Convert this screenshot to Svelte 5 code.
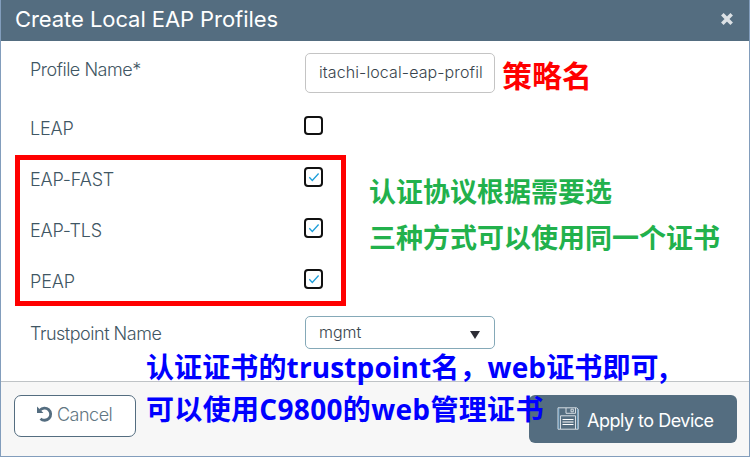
<script>
  const protocols = $state([
    { name: 'LEAP', on: false },
    { name: 'EAP-FAST', on: true },
    { name: 'EAP-TLS', on: true },
    { name: 'PEAP', on: true }
  ]);
</script>

<div class="dialog">
  <header>
    <h1>Create Local EAP Profiles</h1>
    <svg class="close" viewBox="0 0 12 12" width="12" height="12"><path d="M2.6 2.6l6.8 6.8M9.4 2.6l-6.8 6.8" /></svg>
  </header>

  <main>
    <div class="row first">
      <span class="label name">Profile Name*</span>
      <div class="input"><span>itachi-local-eap-profil</span></div>
    </div>
    {#each protocols as p}
      <div class="row">
        <span class="label protocol">{p.name}</span>
        <button class="check" aria-label={p.name} onclick={() => (p.on = !p.on)}>
          {#if p.on}
            <svg viewBox="0 0 16 16" width="16" height="16"><path d="M3.3 8.3l3 3.2 6.3-7" /></svg>
          {/if}
        </button>
      </div>
    {/each}
    <div class="row last">
      <span class="label trust">Trustpoint Name</span>
      <div class="select"><span>mgmt</span><i></i></div>
    </div>
  </main>

  <footer>
    <button class="cancel">
      <svg viewBox="0 0 16 16" width="16" height="16"><path d="M3 4.1A6.1 6.1 0 1 1 3.5 12.7" /><path class="fill" d="M0 .6v6.4h6.4z" /></svg>
      <span>Cancel</span>
    </button>
    <button class="apply">
      <svg viewBox="0 0 22 23" width="22" height="23">
        <path d="M1 .8h18.7l1.5 1.5v19.9H1z" />
        <path d="M9 1v5.3h9.5V1M14 2.2v2.6h2.3V2.2zM3.5 22V8.8h15V22" />
        <path class="lines" d="M5.5 12.5h11M5.5 15h11M5.5 17.5h11" />
        <path class="shade" d="M1.8 1v21M20.6 2v20" />
      </svg>
      <span>Apply to Device</span>
    </button>
  </footer>

  <div class="frame"></div>
  <p class="note red">策略名</p>
  <p class="note green one">认证协议根据需要选</p>
  <p class="note green two">三种方式可以使用同一个证书</p>
  <p class="note blue three">认证证书的<b class="tp">trustpoint</b>名，<b class="web">web</b>证书即可,</p>
  <p class="note blue four">可以使用<b class="model">C9800</b>的<b class="web">web</b>管理证书</p>
</div>

<style>
  .dialog {
    position: relative;
    box-sizing: border-box;
    width: 750px;
    height: 457px;
    overflow: hidden;
    display: flex;
    flex-direction: column;
    background: #fff;
    border: 1px solid #829dbc;
    border-top: 0;
    font-family: Inter, "Liberation Sans", sans-serif;
    font-weight: 300;
    color: #3f5663;
  }
  header {
    height: 41px;
    flex: none;
    box-sizing: border-box;
    margin: 0 -1px;
    padding: 0 17px 3px 15px;
    background: #546d80;
    display: flex;
    align-items: center;
    justify-content: space-between;
  }
  h1 { margin: 0; font-size: 22px; font-weight: 400; line-height: 30px; color: #fff; white-space: nowrap; letter-spacing: -0.07px; }
  .close path { stroke: #dce1e5; stroke-width: 3.6; stroke-linecap: square; fill: none; }
  main { flex: none; height: 340px; box-sizing: border-box; padding: 3px 29px 0; }
  .row { display: flex; align-items: center; height: 51px; }
  .row.first { height: 58px; }
  .row.last { height: 53px; }
  .label { width: 275px; font-size: 18px; line-height: 22px; white-space: nowrap; letter-spacing: -0.48px; }
  .first .label { padding-bottom: 6px; }
  .last .label { padding-top: 2px; }
  .protocol { width: 274px; padding-top: 2px; letter-spacing: -0.15px; }
  .input, .select {
    box-sizing: border-box;
    width: 190px;
    border-radius: 5px;
    font-size: 16px;
    line-height: 20px;
    display: flex;
    white-space: nowrap;
    color: #39444d;
  }
  .input { height: 40px; border: 1px solid #c4c4c4; padding: 8px 13px; letter-spacing: 0.1px; }
  .select { height: 33px; border: 1px solid #85a9b8; padding: 5px 13px; justify-content: space-between; }
  .select i { width: 0; height: 0; margin: 9px 1px 0 0; border: 5px solid transparent; border-top: 8px solid #2d2d35; border-bottom: 0; }
  .check {
    box-sizing: border-box;
    width: 19px;
    height: 19px;
    margin: 0 0 4px;
    padding: 0;
    border: 2px solid #111;
    border-radius: 4px;
    background: #fff;
    display: flex;
    align-items: center;
    justify-content: center;
  }
  .check:has(svg) { height: 20px; margin-bottom: 3px; }
  .check svg { flex: none; }
  .check path { fill: none; stroke: #1d9ed9; stroke-width: 1.3; }
  footer {
    flex: 1;
    display: flex;
    justify-content: space-between;
    align-items: flex-start;
    border-top: 1px solid #bfc3c6;
    background: #f7f7f7;
    padding: 13px 12px 0 13px;
  }
  footer button { font-family: inherit; font-size: 18px; font-weight: 300; display: flex; align-items: center; white-space: nowrap; box-sizing: border-box; }
  .cancel { width: 122px; height: 42px; border: 1px solid #546d80; border-radius: 7px; background: #fff; color: #627682; padding: 0 0 4px 22px; gap: 4px; letter-spacing: -0.5px; }
  .cancel path { fill: none; stroke: #546d80; stroke-width: 2.8; }
  .cancel .fill { fill: #546d80; stroke: none; }
  footer .apply { width: 208px; height: 48px; border: 0; border-radius: 6px; background: #546d80; color: #fff; padding: 3px 0 0 28px; gap: 8px; font-weight: 400; letter-spacing: -0.5px; }
  .apply svg { margin-bottom: 5px; }
  .apply path { fill: none; stroke: #d5dde3; stroke-width: 1; }
  .apply .lines { stroke: #fff; stroke-width: 1.2; }
  .apply .shade { stroke: #87bfe5; stroke-width: 0.7; }
  .frame { position: absolute; left: 14px; top: 155px; width: 331px; height: 151px; box-sizing: border-box; border: 5px solid #f00; }
  .note { position: absolute; margin: 0; white-space: nowrap; font-family: "Noto Sans CJK SC", sans-serif; font-weight: 700; line-height: 40px; }
  .note b { font-family: "Open Sans", "Noto Sans", sans-serif; font-weight: 700; }
  .red { color: #f00; font-size: 30px; left: 501px; top: 54px; }
  .green { color: #22b14c; font-size: 27px; left: 368px; }
  .one { top: 171px; }
  .two { top: 217px; }
  .blue { color: #00f; font-size: 28px; left: 145px; }
  .three { top: 346px; letter-spacing: 0.12px; }
  .four { top: 388px; letter-spacing: 0.33px; }
</style>
